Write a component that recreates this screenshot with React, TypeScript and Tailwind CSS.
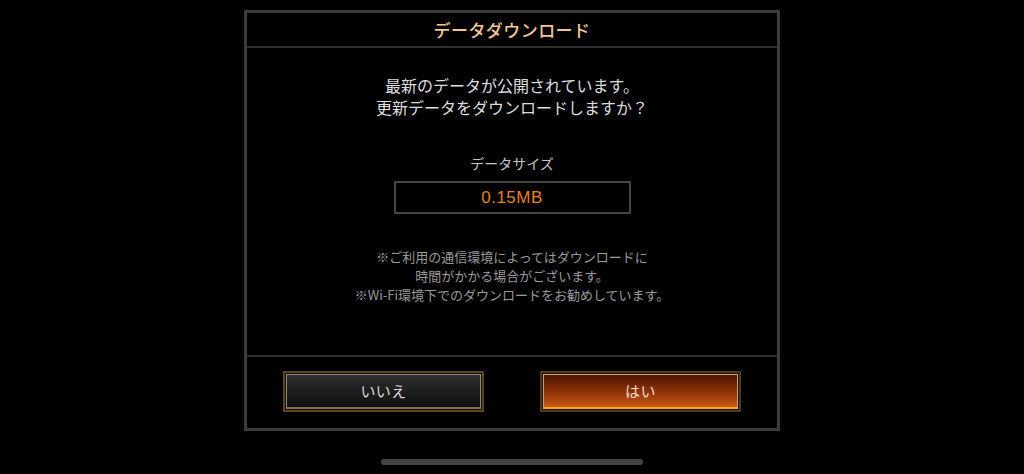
const jp = "font-['Noto_Sans_CJK_JP','Noto_Sans',sans-serif]";

function FrameButton({ label, primary }: { label: string; primary?: boolean }) {
  return (
    <div
      className={
        "h-[41px] w-[201px] border-2 p-px " +
        (primary ? "border-[#4d3c14] bg-[#1a1204]" : "border-[#5a4718] bg-[#14110a]")
      }
    >
      <div
        className={
          "flex h-full w-full items-center justify-center border " +
          (primary
            ? "border-[#c9a07a] border-b-[#f5a62a] border-b-2 bg-gradient-to-b from-[#4e1604] via-[#8a3008] to-[#cc5a14]"
            : "border-[#8a8a86] border-b-[#8c6c42] border-b-2 bg-gradient-to-b from-[#2e2e2e] to-[#101010]")
        }
      >
        <span className={"text-[15px] tracking-wide " + (primary ? "text-[#f3dcc8]" : "text-[#d8d8d8]")}>
          {label}
        </span>
      </div>
    </div>
  );
}

export default function App() {
  return (
    <div className={"flex h-[474px] w-full flex-col items-center bg-black " + jp}>
      <div className="mt-[10px] flex h-[421px] w-[536px] flex-col border-[3px] border-[#3c3c36]">
        <div className="flex h-[35px] items-center justify-center border-b-2 border-[#2c2c28]">
          <h1 className="text-[17px] font-medium tracking-wide text-[#f5c98c]">データダウンロード</h1>
        </div>

        <div className="flex flex-1 flex-col items-center border-b-2 border-[#2e2e2e]">
          <div className="mt-[26px] text-center text-[16px] leading-[22px] text-[#dedede]">
            <p>最新のデータが公開されています。</p>
            <p>更新データをダウンロードしますか？</p>
          </div>
          <p className="mt-[35px] text-[14px] text-[#c4c4c4]">データサイズ</p>
          <div className="mt-[7px] flex h-[33px] w-[237px] items-center justify-center border-2 border-[#444]">
            <span className="font-['Liberation_Sans',sans-serif] text-[17px] tracking-[0.5px] text-[#e8820c]">
              0.15MB
            </span>
          </div>
          <div className="mt-[33px] text-center text-[13px] leading-[19px] text-[#9a9a9a]">
            <p>※ご利用の通信環境によってはダウンロードに</p>
            <p>時間がかかる場合がございます。</p>
            <p>※Wi-Fi環境下でのダウンロードをお勧めしています。</p>
          </div>
        </div>

        <div className="flex h-[71px] items-start justify-between pl-[36px] pr-[36px] pt-[14px]">
          <FrameButton label="いいえ" />
          <FrameButton label="はい" primary />
        </div>
      </div>
      <div className="mt-[28px] h-[6px] w-[262px] rounded-full bg-[#444]" />
    </div>
  );
}
